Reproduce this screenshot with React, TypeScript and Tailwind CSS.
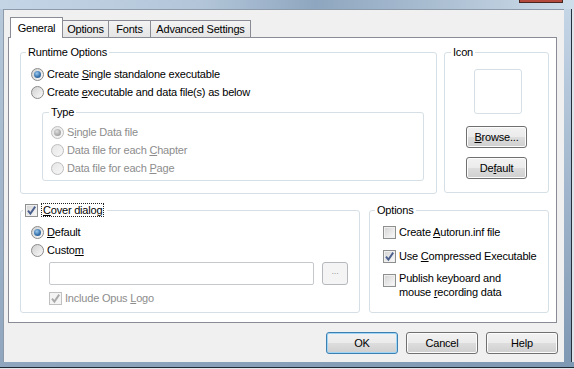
import React from "react";

function Radio({ checked, disabled }: { checked?: boolean; disabled?: boolean }) {
  return (
    <span
      className={`flex h-[13px] w-[13px] shrink-0 items-center justify-center rounded-full border ${
        disabled
          ? "border-[#bdbdbd] bg-[linear-gradient(135deg,#e6e6e6,#f7f7f7)]"
          : "border-[#8a8a8a] bg-[linear-gradient(135deg,#d0d0d0,#fafafa)]"
      }`}
    >
      {checked && (
        <span
          className={`h-[7px] w-[7px] rounded-full ${
            disabled
              ? "bg-[radial-gradient(circle_at_40%_35%,#e0e0e0_0%,#a9a9a9_60%,#9a9a9a_100%)]"
              : "bg-[radial-gradient(circle_at_40%_35%,#9ccaf0_0%,#3a74ad_55%,#1f4c7c_100%)]"
          }`}
        />
      )}
    </span>
  );
}

function Check({ checked, disabled }: { checked?: boolean; disabled?: boolean }) {
  return (
    <span
      className={`flex h-[13px] w-[13px] shrink-0 items-center justify-center border ${
        disabled
          ? "border-[#c0c0c0] bg-[#f4f4f4]"
          : "border-[#8e8f8f] bg-[linear-gradient(135deg,#d2d2d2,#fbfbfb)] shadow-[inset_0_0_0_1px_#f0f0f0]"
      }`}
    >
      {checked && (
        <svg width="11" height="11" viewBox="0 0 11 11">
          <path
            d="M2 5.6 L4.4 8.6 L9.2 1.6"
            fill="none"
            stroke={disabled ? "#a9a9a9" : "#4a5f8e"}
            strokeWidth="1.9"
          />
        </svg>
      )}
    </span>
  );
}

const btn =
  "flex items-center justify-center rounded-[3px] border bg-[linear-gradient(#f2f2f2_0%,#ebebeb_50%,#dddddd_51%,#cfcfcf_100%)]";

function Group({
  label,
  labelLeft,
  className,
  children,
}: {
  label: React.ReactNode;
  labelLeft: string;
  className: string;
  children?: React.ReactNode;
}) {
  return (
    <div className={`relative shrink-0 rounded-[3px] border border-[#d5dfe5] ${className}`}>
      <div className={`absolute -top-[7px] ${labelLeft} bg-white px-[2px] leading-[13px]`}>{label}</div>
      {children}
    </div>
  );
}

function RadioRow({
  checked,
  disabled,
  children,
}: {
  checked?: boolean;
  disabled?: boolean;
  children: React.ReactNode;
}) {
  return (
    <div className={`flex h-[18px] items-center gap-[3px] ${disabled ? "text-[#8d8d8d]" : "text-black"}`}>
      <Radio checked={checked} disabled={disabled} />
      <span>{children}</span>
    </div>
  );
}

export default function App() {
  return (
    <div
      className="flex h-[369px] w-[574px] flex-col overflow-hidden bg-[#9fb4ca] text-[11px] leading-[13px] tracking-[-0.2px] text-black"
      style={{ fontFamily: '"Liberation Sans", Arial, sans-serif' }}
    >
      {/* top frame */}
      <div className="flex h-[9px] shrink-0 justify-end bg-[linear-gradient(90deg,#c4d5e6_0%,#b3c6d9_35%,#8ea6bf_55%,#a9bdd1_75%,#cfdeeb_100%)]">
        <div className="mr-[11px] h-[3px] w-[44px] border-x border-b border-[#4a2520] bg-[#b4493d]" />
      </div>
      <div className="flex h-[353px] shrink-0">
        {/* left frame */}
        <div className="w-[3px] shrink-0 bg-[linear-gradient(#b6c8da,#8fa6be)]" />
        {/* client */}
        <div className="flex w-[561px] shrink-0 flex-col border-l border-t border-[#8c9aaa] bg-[#f0f0f0]">
          {/* tabs */}
          <div className="ml-[6px] mt-[7px] flex h-[20px] items-end">
            <div className="relative z-10 -mb-px flex h-[21px] w-[53px] items-center justify-center border-x border-t border-[#898c95] bg-white">
              General
            </div>
            <div className="-ml-px flex h-[17px] w-[47px] items-center justify-center border-x border-t border-[#898c95] bg-[linear-gradient(#f3f3f3,#e5e5e5)]">
              Options
            </div>
            <div className="-ml-px flex h-[17px] w-[43px] items-center justify-center border-x border-t border-[#898c95] bg-[linear-gradient(#f3f3f3,#e5e5e5)]">
              Fonts
            </div>
            <div className="-ml-px flex h-[17px] w-[101px] items-center justify-center border-x border-t border-[#898c95] bg-[linear-gradient(#f3f3f3,#e5e5e5)]">
              Advanced Settings
            </div>
          </div>
          {/* panel */}
          <div className="ml-[4px] flex h-[286px] w-[549px] flex-col border border-[#898c95] bg-white pl-[11px] pr-[7px] pt-[14px]">
            <div className="flex gap-[7px]">
              <Group label="Runtime Options" labelLeft="left-[5px]" className="h-[142px] w-[417px]">
                <div className="flex flex-col pl-[10px] pt-[12px]">
                  <RadioRow checked>
                    Create <span className="underline">S</span>ingle standalone executable
                  </RadioRow>
                  <RadioRow>
                    Create <span className="underline">e</span>xecutable and data file(s) as below
                  </RadioRow>
                  <Group label="Type" labelLeft="left-[6px]" className="ml-[11px] mt-[11px] h-[69px] w-[382px]">
                    <div className="flex flex-col pl-[8px] pt-[10px]">
                      <RadioRow checked disabled>
                        S<span className="underline">i</span>ngle Data file
                      </RadioRow>
                      <RadioRow disabled>
                        Data file for each <span className="underline">C</span>hapter
                      </RadioRow>
                      <RadioRow disabled>
                        Data file for each <span className="underline">P</span>age
                      </RadioRow>
                    </div>
                  </Group>
                </div>
              </Group>
              <Group label="Icon" labelLeft="left-[6px]" className="h-[141px] w-[105px]">
                <div className="flex flex-col items-center pt-[16px]">
                  <div className="ml-[2px] h-[45px] w-[48px] rounded-[3px] border border-[#d5dfe5] bg-white" />
                  <div className={`${btn} mt-[12px] h-[22px] w-[61px] border-[#707070] shadow-[inset_0_0_0_1px_#fcfcfc]`}>
                    <span>
                      <span className="underline">B</span>rowse...
                    </span>
                  </div>
                  <div className={`${btn} mt-[9px] h-[22px] w-[61px] border-[#707070] shadow-[inset_0_0_0_1px_#fcfcfc]`}>
                    <span>
                      De<span className="underline">f</span>ault
                    </span>
                  </div>
                </div>
              </Group>
            </div>
            <div className="mt-[16px] flex gap-[9px]">
              <Group
                label={
                  <div className="-mt-[2px] flex h-[16px] items-center gap-[3px] pr-[1px]">
                    <Check checked />
                    <span className="border border-dotted border-[#222] px-px leading-[12px]">
                      <span className="underline">C</span>over dialog
                    </span>
                  </div>
                }
                labelLeft="left-[2px]"
                className="h-[103px] w-[340px]"
              >
                <div className="flex flex-col pl-[10px] pt-[12px]">
                  <RadioRow checked>
                    <span className="underline">D</span>efault
                  </RadioRow>
                  <RadioRow>
                    Custo<span className="underline">m</span>
                  </RadioRow>
                  <div className="ml-[18px] mt-[3px] flex gap-[8px]">
                    <div className="h-[23px] w-[265px] rounded-[2px] border border-[#c5c9ce] bg-white" />
                    <div className="flex h-[23px] w-[26px] items-center justify-center rounded-[3px] border border-[#b5b9bd] bg-[#f4f4f4] pb-[4px] text-[9px] text-[#9a9a9a]">
                      ...
                    </div>
                  </div>
                  <div className="ml-[18px] mt-[4px] flex h-[18px] items-center gap-[3px] text-[#8d8d8d]">
                    <Check checked disabled />
                    <span>
                      Include Opus <span className="underline">L</span>ogo
                    </span>
                  </div>
                </div>
              </Group>
              <Group label="Options" labelLeft="left-[5px]" className="h-[103px] w-[180px]">
                <div className="flex flex-col pl-[13px] pt-[12px]">
                  <div className="flex h-[18px] items-center gap-[3px]">
                    <Check />
                    <span>
                      Create <span className="underline">A</span>utorun.inf file
                    </span>
                  </div>
                  <div className="mt-[6px] flex h-[18px] items-center gap-[3px]">
                    <Check checked />
                    <span>
                      Use <span className="underline">C</span>ompressed Executable
                    </span>
                  </div>
                  <div className="mt-[6px] flex items-start gap-[3px] leading-[14px]">
                    <span className="mt-[3px]">
                      <Check />
                    </span>
                    <span>
                      Publish keyboard and
                      <br />
                      mouse <span className="underline">r</span>ecording data
                    </span>
                  </div>
                </div>
              </Group>
            </div>
          </div>
          {/* buttons */}
          <div className="ml-[4px] mt-[9px] flex w-[550px] justify-end gap-[8px]">
            <div className={`${btn} h-[22px] w-[72px] border-[#3c7fb1] shadow-[inset_0_0_0_1px_#9fd6f6]`}>OK</div>
            <div className={`${btn} h-[22px] w-[72px] border-[#707070] shadow-[inset_0_0_0_1px_#fcfcfc]`}>Cancel</div>
            <div className={`${btn} h-[22px] w-[72px] border-[#707070] shadow-[inset_0_0_0_1px_#fcfcfc]`}>Help</div>
          </div>
        </div>
        {/* right frame */}
        <div className="flex w-[10px] shrink-0 bg-[#8aa2bc]">
          <div className="w-[7px] bg-[linear-gradient(#c4d5e6,#7f98b3)]" />
          <div className="w-px bg-[#26313d]" />
          <div className="w-[2px] bg-[#dfe4ea]" />
        </div>
      </div>
      {/* bottom frame */}
      <div className="flex h-[7px] shrink-0 flex-col">
        <div className="h-[5px] bg-[linear-gradient(90deg,#8fa6be,#7f98b3)]" />
        <div className="h-px bg-[#1f2a35]" />
        <div className="h-px bg-[#e2e6ea]" />
      </div>
    </div>
  );
}
